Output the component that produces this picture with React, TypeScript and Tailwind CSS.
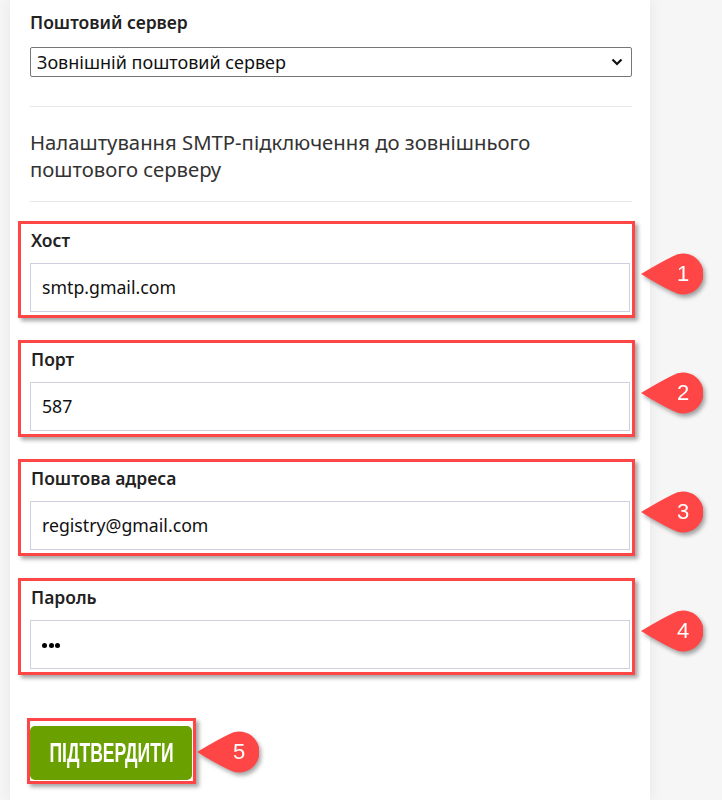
import React from "react";

const Badge = ({ n }: { n: number }) => (
  <div className="absolute flex items-center justify-center w-[62px] h-[44px] drop-shadow-[2px_3px_2px_rgba(0,0,0,0.35)]">
    <svg width="62" height="44" viewBox="0 0 62 44" className="absolute inset-0">
      <path d="M0 22 Q 18 11 31.5 4.4 A 20.5 20.5 0 1 1 31.5 39.6 Q 18 33 0 22 Z" fill="#ff4646" />
    </svg>
    <span className="relative ml-[22px] text-white text-[22px] font-['Liberation_Sans',Arial,sans-serif] leading-none">{n}</span>
  </div>
);

const Field = ({ label, value, n, pwd }: { label: string; value: string; n: number; pwd?: boolean }) => (
  <div className="relative box-border w-[617px] h-[97px] border-[3px] border-[#ff4646] shadow-[3px_3px_4px_rgba(0,0,0,0.35)] pt-[4px]">
    <div className="pl-[10px] text-[17.5px] leading-[24px] font-semibold text-[#222]">{label}</div>
    <div className="ml-[9px] mt-[11px] w-[600px] h-[49px] border border-[#cfcfdf] flex items-center pl-[11px] text-[17.7px] text-[#111]">
      {pwd ? (
        <span className="flex gap-[1.5px] mt-[2px]">
          <span className="w-[5px] h-[5px] rounded-full bg-black" />
          <span className="w-[5px] h-[5px] rounded-full bg-black" />
          <span className="w-[5px] h-[5px] rounded-full bg-black" />
        </span>
      ) : (
        value
      )}
    </div>
    <div className="absolute left-[620px] top-[28px]">
      <Badge n={n} />
    </div>
  </div>
);

export default function App() {
  return (
    <div className="min-h-[800px] w-[722px] bg-[#f6f6f6] font-['Noto_Sans',sans-serif] overflow-hidden">
      <div className="ml-[10px] w-[640px] min-h-[800px] bg-white shadow-[0_0_14px_rgba(0,0,0,0.07)] pl-[8px] flex flex-col">
        <div className="ml-[12px] w-[602px]">
          <div className="pt-[10px] text-[17.5px] leading-[25px] font-semibold text-[#222]">Поштовий сервер</div>
          <div className="mt-[12px] h-[30px] border border-[#767676] rounded-[2px] flex items-center justify-between pl-[6px] pr-[8px] text-[18px] text-[#111]">
            <span>Зовнішній поштовий сервер</span>
            <svg width="12" height="8" viewBox="0 0 12 8">
              <path d="M1.5 1.5 L6 6 L10.5 1.5" fill="none" stroke="#111" strokeWidth="2.2" />
            </svg>
          </div>
          <div className="mt-[29px] h-px bg-[#e8e8e8]" />
          <div className="mt-[22px] text-[20.3px] leading-[27px] text-[#333]">
            Налаштування SMTP-підключення до зовнішнього
            <br />
            поштового серверу
          </div>
          <div className="mt-[18px] h-px bg-[#e8e8e8]" />
        </div>
        <div className="mt-[19px] flex flex-col gap-[22px]">
          <Field label="Хост" value="smtp.gmail.com" n={1} />
          <Field label="Порт" value="587" n={2} />
          <Field label="Поштова адреса" value="registry@gmail.com" n={3} />
          <Field label="Пароль" value="" n={4} pwd />
        </div>
        <div className="mt-[43px] ml-[9px] relative box-border w-[169px] h-[66px] border-[3px] border-[#ff4646] shadow-[3px_3px_4px_rgba(0,0,0,0.35)] pt-[5px]">
          <div className="w-[162px] h-[54px] rounded-[5px] bg-[#6aa000] flex items-center justify-center overflow-hidden">
            <span className="inline-block scale-x-[0.65] text-white text-[27px] font-bold font-['Liberation_Sans',sans-serif] whitespace-nowrap">
              ПІДТВЕРДИТИ
            </span>
          </div>
          <div className="absolute left-[167px] top-[9px]">
            <Badge n={5} />
          </div>
        </div>
      </div>
    </div>
  );
}
